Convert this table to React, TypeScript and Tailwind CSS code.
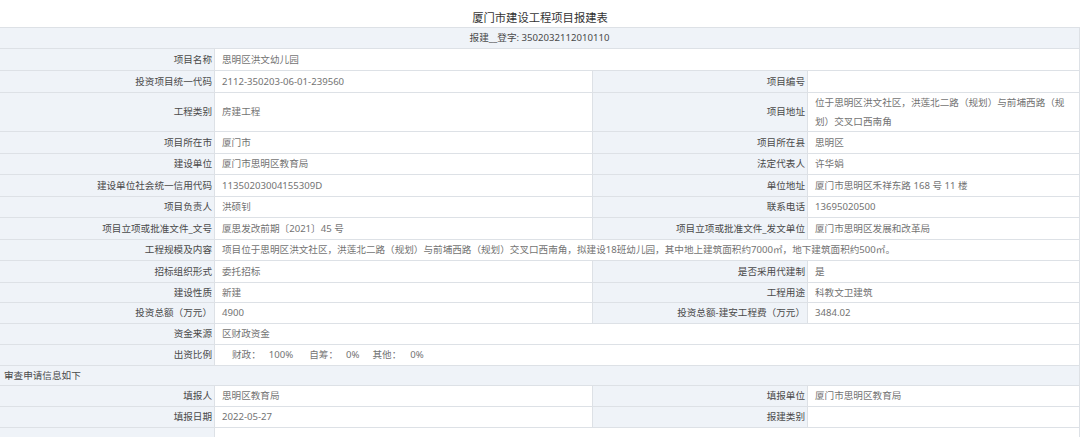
import React from "react";

const FONT = '"Noto Sans", "Noto Sans CJK SC", sans-serif';

type Cell = { label: string; value?: React.ReactNode };

function Label({ children }: { children: React.ReactNode }) {
  return (
    <div className="flex items-center justify-end bg-[#eff3f8] border-r border-[#dde1e6] pr-[2px] text-[#4a4a4a] whitespace-nowrap overflow-hidden">
      {children}
    </div>
  );
}

function Value({ children, span }: { children?: React.ReactNode; span?: boolean }) {
  return (
    <div
      className={
        "flex items-center pl-[7px] pr-[3px] text-[#737373] border-r border-[#dde1e6] whitespace-nowrap " +
        (span ? "col-span-3" : "")
      }
    >
      {children}
    </div>
  );
}

function Row({ h, children }: { h: number; children: React.ReactNode }) {
  return (
    <div
      className="grid grid-cols-[215px_378px_215px_1fr] border-b border-[#dde1e6]"
      style={{ height: h }}
    >
      {children}
    </div>
  );
}

function Pair({ h, a, b }: { h: number; a: Cell; b: Cell }) {
  return (
    <Row h={h}>
      <Label>{a.label}</Label>
      <Value>{a.value}</Value>
      <Label>{b.label}</Label>
      <Value>{b.value}</Value>
    </Row>
  );
}

function Single({ h, a }: { h: number; a: Cell }) {
  return (
    <Row h={h}>
      <Label>{a.label}</Label>
      <Value span>{a.value}</Value>
    </Row>
  );
}

export default function App() {
  return (
    <div
      className="w-[1080px] h-[437px] overflow-hidden bg-white text-[9.6px] leading-none"
      style={{ fontFamily: FONT }}
    >
      <div className="h-[28px] flex items-center justify-center pt-[9px] border-b border-[#dde1e6] text-[11.3px] text-[#333]">
        厦门市建设工程项目报建表
      </div>
      <div className="h-[21px] flex items-center justify-center bg-[#eff3f8] border-b border-[#dde1e6] border-r text-[#4a4a4a]">
        报建__登字: 3502032112010110
      </div>
      <Single h={22} a={{ label: "项目名称", value: "思明区洪文幼儿园" }} />
      <Pair
        h={22}
        a={{ label: "投资项目统一代码", value: "2112-350203-06-01-239560" }}
        b={{ label: "项目编号", value: "" }}
      />
      <Row h={39}>
        <Label>工程类别</Label>
        <Value>房建工程</Value>
        <Label>项目地址</Label>
        <div className="flex items-center pl-[7px] pr-[3px] text-[#737373] border-r border-[#dde1e6] leading-[19px] whitespace-nowrap">
          <div>
            位于思明区洪文社区，洪莲北二路（规划）与前埔西路（规
            <br />
            划）交叉口西南角
          </div>
        </div>
      </Row>
      <Pair
        h={22}
        a={{ label: "项目所在市", value: "厦门市" }}
        b={{ label: "项目所在县", value: "思明区" }}
      />
      <Pair
        h={21}
        a={{ label: "建设单位", value: "厦门市思明区教育局" }}
        b={{ label: "法定代表人", value: "许华娟" }}
      />
      <Pair
        h={22}
        a={{ label: "建设单位社会统一信用代码", value: "11350203004155309D" }}
        b={{ label: "单位地址", value: "厦门市思明区禾祥东路 168 号 11 楼" }}
      />
      <Pair
        h={21}
        a={{ label: "项目负责人", value: "洪硕钊" }}
        b={{ label: "联系电话", value: "13695020500" }}
      />
      <Pair
        h={22}
        a={{ label: "项目立项或批准文件_文号", value: "厦思发改前期〔2021〕45 号" }}
        b={{ label: "项目立项或批准文件_发文单位", value: "厦门市思明区发展和改革局" }}
      />
      <Single
        h={21}
        a={{
          label: "工程规模及内容",
          value:
            "项目位于思明区洪文社区，洪莲北二路（规划）与前埔西路（规划）交叉口西南角，拟建设18班幼儿园，其中地上建筑面积约7000㎡，地下建筑面积约500㎡。",
        }}
      />
      <Pair
        h={22}
        a={{ label: "招标组织形式", value: "委托招标" }}
        b={{ label: "是否采用代建制", value: "是" }}
      />
      <Pair
        h={20}
        a={{ label: "建设性质", value: "新建" }}
        b={{ label: "工程用途", value: "科教文卫建筑" }}
      />
      <Pair
        h={21}
        a={{ label: "投资总额（万元）", value: "4900" }}
        b={{ label: "投资总额-建安工程费（万元）", value: "3484.02" }}
      />
      <Single h={21} a={{ label: "资金来源", value: "区财政资金" }} />
      <Row h={21}>
        <Label>出资比例</Label>
        <div className="col-span-3 flex items-center pl-[17px] text-[#737373] border-r border-[#dde1e6]">
          <span>财政：</span>
          <span className="ml-[8px]">100%</span>
          <span className="ml-[16px]">自筹：</span>
          <span className="ml-[8px]">0%</span>
          <span className="ml-[13px]">其他：</span>
          <span className="ml-[9px]">0%</span>
        </div>
      </Row>
      <div className="h-[20px] flex items-center pl-[4px] bg-[#eff3f8] border-b border-r border-[#dde1e6] text-[#4a4a4a]">
        审查申请信息如下
      </div>
      <Pair
        h={21}
        a={{ label: "填报人", value: "思明区教育局" }}
        b={{ label: "填报单位", value: "厦门市思明区教育局" }}
      />
      <Pair
        h={21}
        a={{ label: "填报日期", value: "2022-05-27" }}
        b={{ label: "报建类别", value: "" }}
      />
      <Single h={22} a={{ label: "", value: "" }} />
    </div>
  );
}
